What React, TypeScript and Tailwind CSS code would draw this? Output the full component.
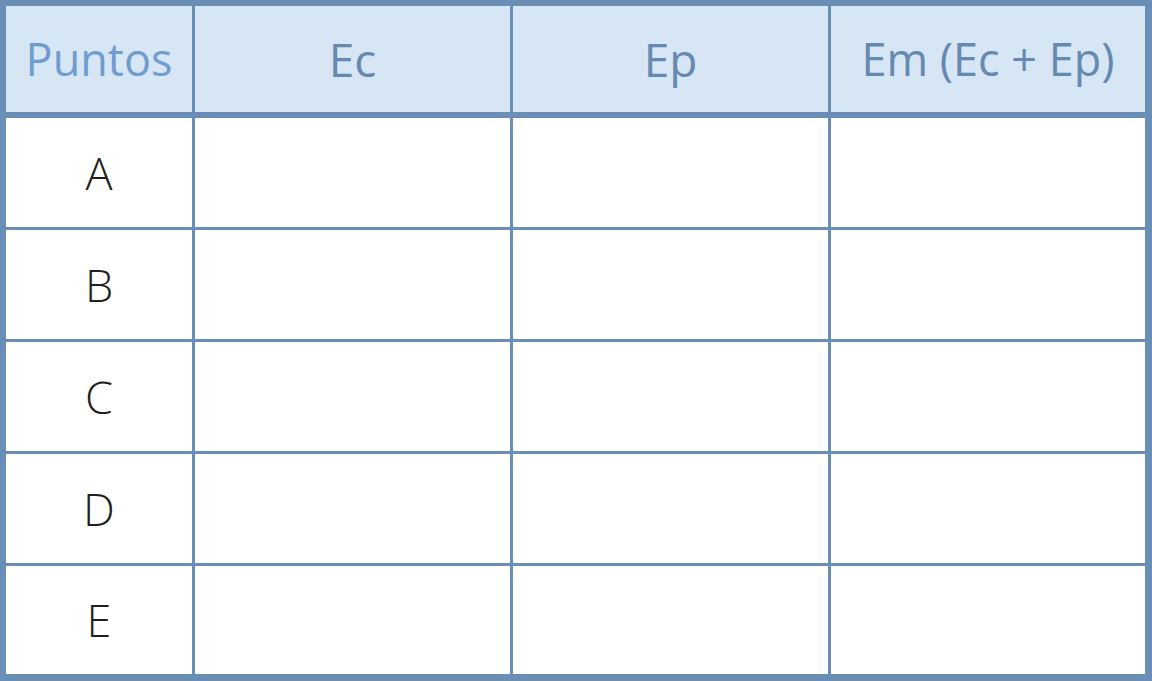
import React from "react";

const rows = ["A", "B", "C", "D", "E"];

export default function App() {
  return (
    <div
      className="w-[1152px] h-[681px] bg-[#6a8fb6] pt-[6px] pl-[6px] pr-[7px] pb-[7px] overflow-hidden"
      style={{ fontFamily: '"Open Sans", "Noto Sans", sans-serif' }}
    >
      <div className="grid grid-cols-[186px_315px_315px_1fr] grid-rows-[109px_109px_109px_109px_109px_108px] gap-x-[3px] gap-y-[3px] h-full">
        <div className="bg-[#d6e6f4] flex items-center justify-center text-[45px] text-[#709cd0] mb-[3px]">Puntos</div>
        <div className="bg-[#d6e6f4] flex items-center justify-center text-[46px] text-[#6689b1] mb-[3px]">Ec</div>
        <div className="bg-[#d6e6f4] flex items-center justify-center text-[46px] text-[#6689b1] mb-[3px]">Ep</div>
        <div className="bg-[#d6e6f4] flex items-center justify-center text-[45px] text-[#6689b1] mb-[3px]">Em (Ec + Ep)</div>
        {rows.map((r) => (
          <React.Fragment key={r}>
            <div className="bg-white flex items-center justify-center text-[45px] font-light text-[#231f20]">{r}</div>
            <div className="bg-white" />
            <div className="bg-white" />
            <div className="bg-white" />
          </React.Fragment>
        ))}
      </div>
    </div>
  );
}
